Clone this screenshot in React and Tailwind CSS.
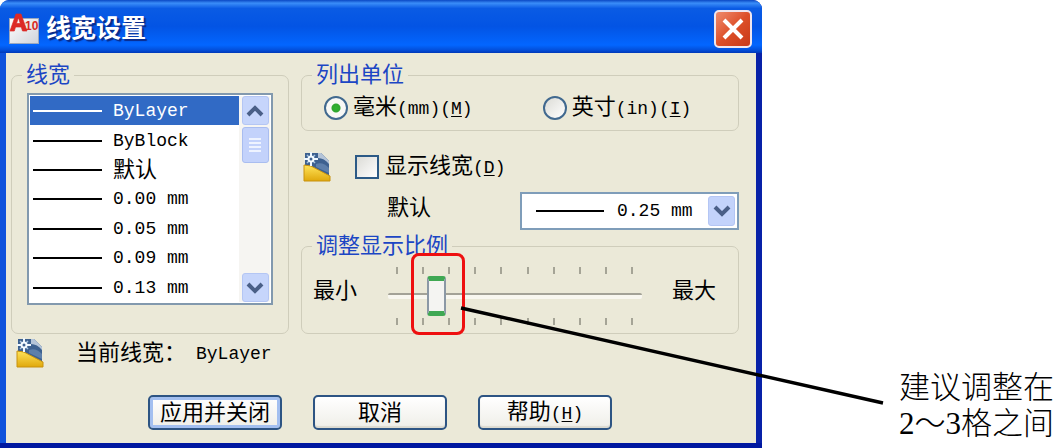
import { useState } from 'react'

const weights = ['ByLayer', 'ByBlock', '默认', '0.00 mm', '0.05 mm', '0.09 mm', '0.13 mm']
const ticks = [0, 1, 2, 3, 4, 5, 6, 7, 8, 9]

function Mono({ children }) {
  return <span className="font-['Liberation_Mono','Noto_Sans_CJK_SC',monospace] text-[18px]">{children}</span>
}

function Key({ children }) {
  return (
    <Mono>
      (<span className="underline underline-offset-2">{children}</span>)
    </Mono>
  )
}

function AppIcon() {
  return (
    <svg className="w-[32px] h-[34px] shrink-0" viewBox="0 0 32 34">
      <defs>
        <linearGradient id="paper" x1="0" y1="0" x2="1" y2="1">
          <stop offset="0" stopColor="#ffffff" />
          <stop offset="1" stopColor="#cfd3da" />
        </linearGradient>
      </defs>
      <rect x="1.500" y="8.500" width="29" height="25" fill="url(#paper)" stroke="#9aa8c0" />
      <path d="M2 21 L8 4 H13 L19 21 H14.500 L13.300 17 H7.500 L6.300 21 Z M8.500 13.500 H12.300 L10.400 7.500 Z" fill="#dc2a26" stroke="#dc2a26" strokeWidth="0.700" fillRule="evenodd" />
      <text x="17" y="20" fontSize="12" fontWeight="700" fill="#d82a24" fontFamily="Liberation Sans, sans-serif">10</text>
    </svg>
  )
}

function DrawingIcon() {
  return (
    <svg className="w-[28px] h-[30px] shrink-0" viewBox="0 0 28 30">
      <defs>
        <linearGradient id="fold" x1="0" y1="0" x2="0" y2="1">
          <stop offset="0" stopColor="#ffe45a" />
          <stop offset="1" stopColor="#e0a80c" />
        </linearGradient>
      </defs>
      <path d="M2 1 H18 L26 9 V27 H2 Z" fill="#3d6190" />
      <path d="M15 1 H18 L26 9 V12 C23 8 19 6 15 6 Z" fill="#b4c4d8" />
      <path d="M13 12 C18 10 22 12 26 16 V21 L13 15 Z" fill="#5d7fab" />
      <path d="M1 13 L8 14 L27 24 V29 H1 Z" fill="url(#fold)" stroke="#c8920e" />
      <path d="M8 0 V14 M1 7 H15" stroke="#eef7ff" strokeWidth="2" />
      <path d="M4 3 L12 11 M12 3 L4 11" stroke="#a9c6e2" strokeWidth="1.500" />
      <circle cx="8" cy="7" r="3.500" fill="#f4fbff" />
      <circle cx="8" cy="7" r="1.500" fill="#3d6190" />
    </svg>
  )
}

function Chevron({ up }) {
  return (
    <svg className="w-[18px] h-[12px]" viewBox="0 0 18 12" fill="none" stroke="#4a5f87" strokeWidth="4">
      <path d={up ? 'M2 10 L9 3 L16 10' : 'M2 2 L9 9 L16 2'} />
    </svg>
  )
}

function Group({ title, className, children }) {
  return (
    <fieldset className="min-w-0 rounded-[7px] border border-[#cfcdbb]">
      <legend className="ml-[10px] px-1 leading-[22px] text-[#1c46c4]">{title}</legend>
      <div className={className}>{children}</div>
    </fieldset>
  )
}

function Ticks() {
  return (
    <div className="flex h-[7px] justify-between px-[8px]">
      {ticks.map((t) => (
        <span key={t} className="w-[2px] bg-[#a5a496]"></span>
      ))}
    </div>
  )
}

function WeightList({ value, onChange }) {
  return (
    <div className="flex h-[212px] border-2 border-[#8299ae] bg-white p-px">
      <ul role="listbox" aria-label="线宽" className="flex flex-1 flex-col">
        {weights.map((w) => (
          <li
            key={w}
            role="option"
            aria-selected={w === value}
            onClick={() => onChange(w)}
            className={`flex flex-1 items-center gap-[11px] pt-px pl-[3px] ${
              w === value ? 'bg-[#316ac5] text-white' : 'text-black'
            }`}
          >
            <span className="h-[2px] w-[69px] bg-current"></span>
            {w === '默认' ? w : <Mono>{w}</Mono>}
          </li>
        ))}
      </ul>
      <div className="flex w-[31px] flex-col items-center bg-[#f6f5f2] pl-px">
        <button aria-label="向上" className="flex h-[29px] w-[27px] items-center justify-center rounded-[3px] border border-[#b4c6f4] bg-[#c6d5fb]">
          <Chevron up />
        </button>
        <div className="mt-[2px] flex h-[36px] w-[27px] flex-col items-center justify-center gap-[2px] rounded-[3px] border border-[#a9bdf0] bg-[#c3d2fb]">
          <span className="h-[2px] w-[12px] bg-[#eef3ff]"></span>
          <span className="h-[2px] w-[12px] bg-[#eef3ff]"></span>
          <span className="h-[2px] w-[12px] bg-[#eef3ff]"></span>
          <span className="h-[2px] w-[12px] bg-[#eef3ff]"></span>
        </div>
        <button aria-label="向下" className="mt-auto flex h-[29px] w-[27px] items-center justify-center rounded-[3px] border border-[#b4c6f4] bg-[#c6d5fb]">
          <Chevron />
        </button>
      </div>
    </div>
  )
}

function UnitRadio({ value, unit, onChange, children }) {
  return (
    <label className="flex items-center gap-[5px] whitespace-nowrap">
      <input
        type="radio"
        name="unit"
        value={value}
        checked={unit === value}
        onChange={() => onChange(value)}
        className="h-[24px] w-[24px] appearance-none rounded-full border-2 border-[#41698f] bg-linear-to-br from-[#dcdcd6] to-white checked:bg-[radial-gradient(circle,#2fb52f_0,#2fa52f_4px,#f8f8f5_5px)]"
      />
      <span>{children}</span>
    </label>
  )
}

function DialogButton({ primary, children }) {
  return (
    <button
      className={`h-[35px] w-[134px] rounded-[5px] border-2 border-[#2d5483] bg-linear-to-b from-white to-[#efeee8] leading-[22px] ${
        primary ? 'shadow-[inset_0_0_0_3px_#a3bff0]' : 'shadow-[inset_0_-2px_1px_#dcdad0]'
      }`}
    >
      {children}
    </button>
  )
}

export default function App() {
  const [weight, setWeight] = useState('ByLayer')
  const [unit, setUnit] = useState('mm')
  const [show, setShow] = useState(false)
  const [scale, setScale] = useState(17)

  return (
    <div className="relative flex bg-white font-['Liberation_Sans','Noto_Sans_CJK_SC',sans-serif] text-[22px] leading-[22px] text-black">
      <main className="max-w-[762px] flex-1 overflow-hidden rounded-t-[9px] bg-linear-to-r from-[#0f52dc] from-50% to-[#0821a8] to-50%">
        {/* Title bar */}
        <header className="flex h-[53px] items-center bg-[linear-gradient(to_bottom,#0a48c4_0%,#3a8df8_6%,#0a5be4_16%,#0354e4_50%,#0366ff_85%,#0350dc_94%,#0038b8_100%)] pr-[10px] pl-2">
          <AppIcon />
          <h1 className="ml-[6px] pt-[2px] text-[25px] font-bold text-white [text-shadow:2px_2px_1px_#0a2a88]">线宽设置</h1>
          <button
            aria-label="关闭"
            className="mt-1 ml-auto flex h-[38px] w-[38px] items-center justify-center rounded-[5px] border-2 border-[#f0e6ee] bg-linear-to-br from-[#ee8a6c] via-[#dd4f28] to-[#c8391a]"
          >
            <svg className="h-[22px] w-[22px]" viewBox="0 0 22 22" stroke="#ffffff" strokeWidth="4">
              <path d="M2 2 L20 20 M20 2 L2 20" />
            </svg>
          </button>
        </header>

        <div className="border-b-[5px] border-[#0018a0] px-[6px]">
          <div className="bg-[#ebe9d8] pt-[11px] pr-[17px] pb-[13px] pl-[5px]">
            <div className="flex gap-3">
              {/* Line weight list */}
              <section className="w-[278px] shrink-0">
                <Group title="线宽" className="px-[15px] pt-[7px] pb-[28px]">
                  <WeightList value={weight} onChange={setWeight} />
                </Group>
              </section>

              <section className="min-w-0 flex-1">
                <Group title="列出单位" className="flex gap-[70px] pt-[10px] pb-[10px] pl-[22px]">
                  <UnitRadio value="mm" unit={unit} onChange={setUnit}>
                    毫米<Mono>(mm)</Mono><Key>M</Key>
                  </UnitRadio>
                  <UnitRadio value="in" unit={unit} onChange={setUnit}>
                    英寸<Mono>(in)</Mono><Key>I</Key>
                  </UnitRadio>
                </Group>

                <div className="mt-[21px] flex items-center pl-[2px]">
                  <DrawingIcon />
                  <label className="ml-6 flex items-center gap-[6px]">
                    <input
                      type="checkbox"
                      checked={show}
                      onChange={(e) => setShow(e.target.checked)}
                      className="h-[24px] w-[24px] appearance-none border-2 border-[#2c5a86] bg-linear-to-br from-[#dcdcd7] to-white checked:bg-[#2fa52f]"
                    />
                    <span>显示线宽<Key>D</Key></span>
                  </label>
                </div>

                <div className="mt-[10px] flex items-center justify-between pl-[86px]">
                  <label htmlFor="default-weight" className="pb-[6px]">默认</label>
                  <div className="relative w-[219px]">
                    <select
                      id="default-weight"
                      defaultValue="0.25 mm"
                      className="h-[38px] w-full appearance-none border-2 border-[#7f9db9] bg-white pl-[95px] font-['Liberation_Mono',monospace] text-[18px]"
                    >
                      <option>0.25 mm</option>
                      <option>0.30 mm</option>
                    </select>
                    <span className="pointer-events-none absolute top-[18px] left-4 h-[2px] w-[68px] bg-black"></span>
                    <span className="pointer-events-none absolute top-[4px] right-[4px] flex h-[30px] w-[27px] items-center justify-center rounded-[3px] border border-[#b4c6f4] bg-[#c3d3fb]">
                      <Chevron />
                    </span>
                  </div>
                </div>

                {/* Display scale */}
                <div className="mt-[5px]">
                  <Group title="调整显示比例" className="flex items-center justify-between pt-[10px] pr-[22px] pb-[8px] pl-[11px]">
                    <span className="pb-[10px]">最小</span>
                    <div className="relative w-[254px]">
                      <Ticks />
                      <input
                        type="range"
                        aria-label="调整显示比例"
                        min="0"
                        max="100"
                        value={scale}
                        onChange={(e) => setScale(Number(e.target.value))}
                        className="my-[2px] block h-[40px] w-full appearance-none bg-transparent [&::-webkit-slider-runnable-track]:h-[6px] [&::-webkit-slider-runnable-track]:rounded-[2px] [&::-webkit-slider-runnable-track]:border-t-2 [&::-webkit-slider-runnable-track]:border-[#a3a297] [&::-webkit-slider-runnable-track]:bg-[#f8f7f0] [&::-webkit-slider-thumb]:mt-[-19px] [&::-webkit-slider-thumb]:h-[40px] [&::-webkit-slider-thumb]:w-[19px] [&::-webkit-slider-thumb]:appearance-none [&::-webkit-slider-thumb]:rounded-[3px] [&::-webkit-slider-thumb]:border-x-2 [&::-webkit-slider-thumb]:border-y-[5px] [&::-webkit-slider-thumb]:border-x-[#8b98a5] [&::-webkit-slider-thumb]:border-y-[#3fa853] [&::-webkit-slider-thumb]:bg-[#f4f4f2]"
                      />
                      <Ticks />
                      <span className="pointer-events-none absolute top-[-14px] left-[23px] h-[82px] w-[54px] rounded-[8px] border-[3px] border-[#ee1010]"></span>
                    </div>
                    <span className="pb-[10px]">最大</span>
                  </Group>
                </div>
              </section>
            </div>

            <div className="mt-[4px] flex items-center pl-[5px]">
              <DrawingIcon />
              <span className="ml-[32px]">当前线宽：</span>
              <span className="ml-[10px]"><Mono>{weight}</Mono></span>
            </div>

            <div className="mt-[27px] flex gap-[31px] pl-[137px]">
              <DialogButton primary>应用并关闭</DialogButton>
              <DialogButton>取消</DialogButton>
              <DialogButton>帮助<Key>H</Key></DialogButton>
            </div>
          </div>
        </div>
      </main>

      <aside className="flex w-[291px] shrink-0 flex-col justify-end overflow-hidden pb-[6px] pl-[137px] font-['Liberation_Serif','Noto_Sans_CJK_SC',serif] text-[31px] leading-[36px] font-light whitespace-nowrap">
        <p>建议调整在</p>
        <p>2～3格之间</p>
      </aside>

      {/* Callout line */}
      <svg className="pointer-events-none absolute top-[304px] right-[168px] h-[104px] w-[428px]" viewBox="0 0 428 104">
        <path d="M4 4 L426 99" stroke="#000000" strokeWidth="3.500" />
      </svg>
    </div>
  )
}
